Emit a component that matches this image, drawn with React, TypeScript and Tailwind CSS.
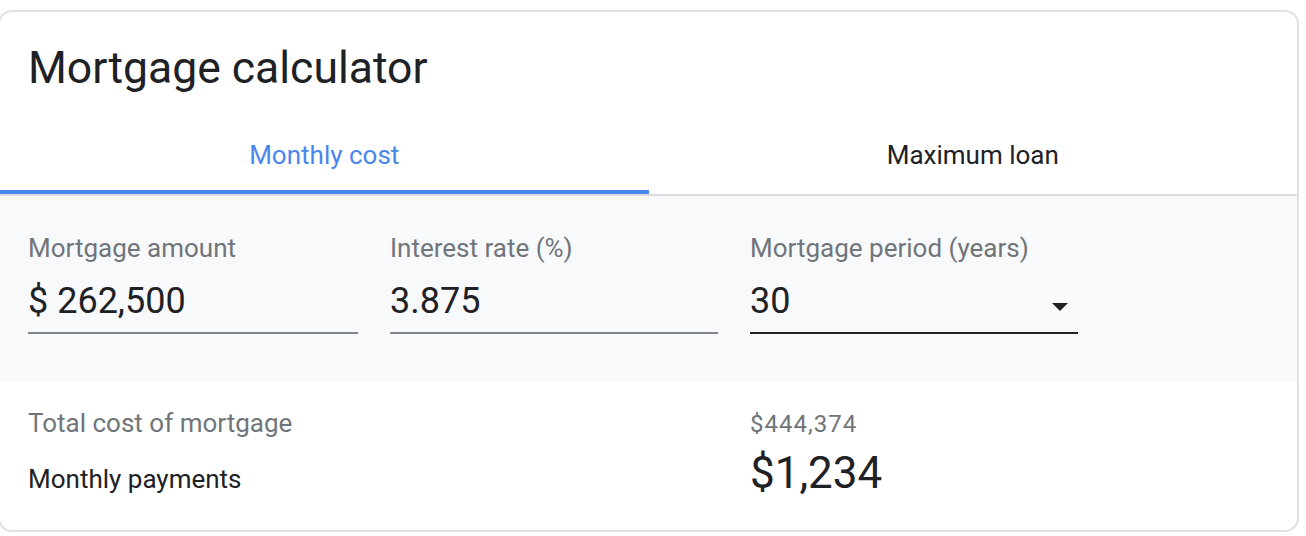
import React, { useState } from 'react'

const fieldLabel = 'text-[26px] leading-[26px] text-[#70757a]'
const fieldValue = 'text-[36px] leading-[36px] text-[#202124]'

function Field({
  label,
  value,
  width,
  dark = false,
  select = false,
}: {
  label: string
  value: string
  width: string
  dark?: boolean
  select?: boolean
}) {
  return (
    <div className={`${width} flex flex-col`}>
      <div className={fieldLabel}>{label}</div>
      <div
        className={`mt-[22px] pb-[13px] flex items-start justify-between border-b-2 ${
          dark ? 'border-[#202124]' : 'border-[#80868b]'
        }`}
      >
        <span className={fieldValue}>{value}</span>
        {select && (
          <svg width="16" height="8" viewBox="0 0 16 8" className="mt-[20px] mr-[10px]" aria-hidden>
            <polygon points="0,0 16,0 8,8" fill="#202124" />
          </svg>
        )}
      </div>
    </div>
  )
}

export default function App() {
  const [tab, setTab] = useState<'monthly' | 'max'>('monthly')

  return (
    <div className="w-[1306px] h-[536px] bg-white pt-[10px] overflow-hidden font-['Roboto',sans-serif]">
      <div className="-ml-[2px] w-[1301px] h-[522px] border-2 border-[#dfe1e5] rounded-[14px] overflow-hidden flex flex-col">
        <h1 className="pt-[34px] pl-[28px] text-[44.5px] leading-[44px] text-[#202124] font-normal">
          Mortgage calculator
        </h1>

        <div className="flex border-b-2 border-[#dadce0]">
          {[
            { id: 'monthly' as const, label: 'Monthly cost' },
            { id: 'max' as const, label: 'Maximum loan' },
          ].map((t) => {
            const active = tab === t.id
            return (
              <button
                key={t.id}
                type="button"
                onClick={() => setTab(t.id)}
                className="flex-1 flex flex-col items-center pt-[52px]"
              >
                <span
                  className={`text-[26px] leading-[26px] pb-[22px] ${
                    active ? 'text-[#4b86ee]' : 'text-[#202124]'
                  }`}
                >
                  {t.label}
                </span>
                <span className={`w-full h-[4px] ${active ? 'bg-[#4b86ee]' : 'bg-transparent'}`} />
              </button>
            )
          })}
        </div>

        <div className="bg-[#f8f9fa] h-[186px] pt-[39px] pl-[28px] flex gap-x-[32px]">
          <Field label="Mortgage amount" value="$ 262,500" width="w-[330px]" />
          <Field label="Interest rate (%)" value="3.875" width="w-[328px]" />
          <Field label="Mortgage period (years)" value="30" width="w-[328px]" dark select />
        </div>

        <div className="pl-[28px] pt-[28px] flex flex-col">
          <div className="flex items-baseline">
            <div className="w-[722px] text-[26px] leading-[26px] text-[#70757a]">Total cost of mortgage</div>
            <div className="text-[24px] leading-[24px] tracking-[1px] text-[#70757a]">$444,374</div>
          </div>
          <div className="mt-[15px] flex items-baseline">
            <div className="w-[722px] text-[26px] leading-[26px] text-[#202124]">Monthly payments</div>
            <div className="text-[44px] leading-[44px] text-[#202124]">$1,234</div>
          </div>
        </div>
      </div>
    </div>
  )
}
